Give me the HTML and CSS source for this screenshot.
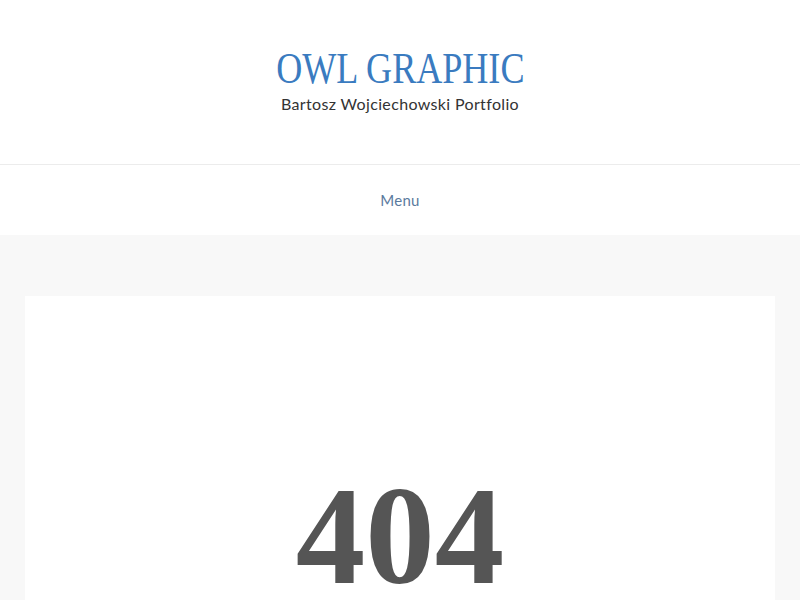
FILE: index.html
```html
<!DOCTYPE html>
<html>
<head>
<meta charset="utf-8">
<link rel="stylesheet" href="styles.css">
</head>
<body>
<header class="site-header">
  <h1 class="site-title">OWL GRAPHIC</h1>
  <p class="site-desc">Bartosz Wojciechowski Portfolio</p>
</header>
<nav class="site-nav"><span class="menu">Menu</span></nav>
<main class="content">
  <section class="card">
    <div class="big">404</div>
  </section>
</main>
</body>
</html>
```
FILE: styles.css
```css
html, body { margin: 0; padding: 0; }
body { background: #fff; font-family: Lato, "Open Sans", sans-serif; overflow: hidden; height: 600px; }
.site-header { height: 164px; border-bottom: 1px solid #ececec; display: flex; flex-direction: column; align-items: center; box-sizing: content-box; }
.site-title { margin: 44px 0 0; font-family: "Liberation Serif", serif; font-weight: normal; font-size: 44px; line-height: 50px; color: #3a7bc0; letter-spacing: 0; transform: scaleX(0.82); white-space: nowrap; }
.site-desc { margin: 0; font-size: 16px; line-height: 20px; color: #333; letter-spacing: 0.35px; }
.site-nav { height: 70px; display: flex; align-items: center; justify-content: center; }
.menu { font-size: 15px; color: #5a7a9e; letter-spacing: 0.3px; }
.content { background: #f8f8f8; padding: 61px 25px 0; height: 400px; }
.card { background: #fff; height: 400px; display: flex; justify-content: center; }
.big { margin-top: 160px; font-family: "Liberation Serif", serif; font-weight: bold; font-size: 139px; line-height: 160px; color: #555; }
```
